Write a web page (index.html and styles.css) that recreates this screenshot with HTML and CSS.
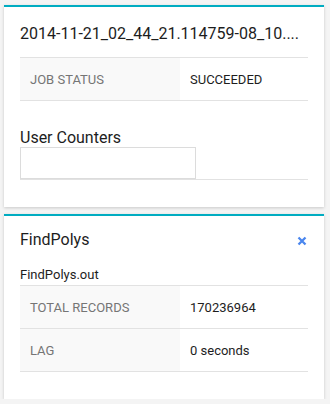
FILE: index.html
```html
<!DOCTYPE html>
<html>
<head>
<meta charset="utf-8">
<link rel="stylesheet" href="styles.css">
</head>
<body>
<div class="page">
  <section class="card">
    <h2 class="title first">2014-11-21_02_44_21.114759-08_10....</h2>
    <table class="kv">
      <tr><td class="k">JOB STATUS</td><td class="v">SUCCEEDED</td></tr>
    </table>
    <h3 class="sub">User Counters</h3>
    <div class="counters"><div class="box"></div></div>
  </section>
  <section class="card">
    <div class="head">
      <h2 class="title">FindPolys</h2>
      <svg class="close" width="10" height="10" viewBox="0 0 10 10"><path d="M1.5 1.5 L8.5 8.5 M8.5 1.5 L1.5 8.5" stroke="#4a86ee" stroke-width="2.3" stroke-linecap="butt"/></svg>
    </div>
    <div class="file">FindPolys.out</div>
    <table class="kv">
      <tr><td class="k">TOTAL RECORDS</td><td class="v">170236964</td></tr>
      <tr><td class="k">LAG</td><td class="v">0 seconds</td></tr>
    </table>
  </section>
</div>
</body>
</html>
```
FILE: styles.css
```css
html, body { margin: 0; padding: 0; }
body {
  background: #f4f4f4;
  font-family: Roboto, "Liberation Sans", sans-serif;
  color: #212121;
}
.page {
  padding: 5px 6px 0 4px;
  display: flex;
  flex-direction: column;
  gap: 7px;
}
.card {
  width: 320px;
  box-sizing: border-box;
  background: #fff;
  border-top: 2px solid #00acc1;
  box-shadow: 0 1px 3px rgba(0,0,0,0.18);
  padding: 0 16px 27px;
}
.title {
  margin: 0;
  font-size: 16px;
  font-weight: 400;
  line-height: 20px;
  white-space: nowrap;
  color: #1d1d1d;
}
.title.first {
  padding-top: 17px;
  margin-bottom: 13px;
}
.head {
  display: flex;
  align-items: center;
  justify-content: space-between;
  padding-top: 14px;
}
.close { margin-right: 1px; margin-top: 2px; }
.file {
  font-size: 13px;
  line-height: 16px;
  margin-top: 17px;
  margin-bottom: 2px;
  color: #1d1d1d;
}
.kv {
  width: 100%;
  border-collapse: collapse;
  font-size: 13px;
}
.kv td {
  height: 42px;
  padding: 0 10px;
  border-top: 1px solid #e2e2e2;
  border-bottom: 1px solid #e2e2e2;
  vertical-align: middle;
}
.kv .k {
  width: 140px;
  background: #f9f9f9;
  color: #757575;
}
.kv .v { color: #1d1d1d; }
.sub {
  margin: 28px 0 0;
  font-size: 16px;
  font-weight: 400;
  line-height: 18px;
  color: #1d1d1d;
}
.counters {
  border-bottom: 1px solid #e2e2e2;
  display: flex;
}
.box {
  width: 176px;
  height: 32px;
  box-sizing: border-box;
  border: 1px solid #dcdcdc;
}
```
